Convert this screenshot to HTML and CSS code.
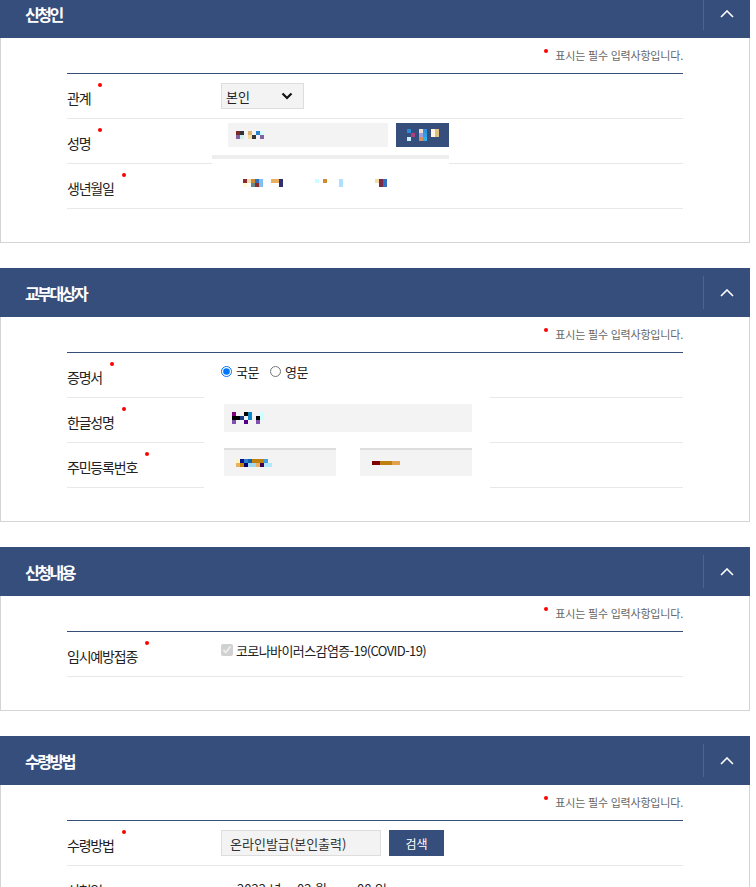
FILE: index.html
```html
<!DOCTYPE html>
<html lang="ko">
<head>
    <meta charset="UTF-8">
    <meta name="viewport" content="width=device-width, initial-scale=1.0">
    <title>신청서 작성</title>
    <link rel="stylesheet" href="styles.css">
</head>
<body>
    <div class="page">
        <!-- 신청인 -->
        <section class="panel">
            <div class="panel-head">
                <h2>신청인</h2>
                <button class="fold" type="button"><svg width="14" height="8" viewBox="0 0 14 8"><polyline points="1,7 7,1 13,7" fill="none" stroke="#fff" stroke-width="1.6"/></svg></button>
            </div>
            <div class="panel-body">
                <p class="req-note">표시는 필수 입력사항입니다.</p>
                <div class="form-table">
                    <div class="row">
                        <div class="label req">관계</div>
                        <div class="value">
                            <div class="select small">본인
                                <svg width="12" height="8" viewBox="0 0 12 8"><polyline points="1.5,1.5 6,6 10.5,1.5" fill="none" stroke="#111" stroke-width="2.2"/></svg>
                            </div>
                        </div>
                    </div>
                    <div class="row">
                        <div class="label req">성명</div>
                        <div class="value name-cell">
                            <div class="name-line">
                                <div class="field name-field">
                                    <svg class="mosaic" width="32" height="8" viewBox="0 0 32 8">
                                        <rect x="0" y="0" width="4" height="4" fill="#7b2a2a"/><rect x="4" y="0" width="4" height="4" fill="#333"/>
                                        <rect x="0" y="4" width="4" height="4" fill="#8060a0"/><rect x="4" y="4" width="4" height="4" fill="#cfeeee"/>
                                        <rect x="12" y="0" width="4" height="4" fill="#e0b070"/><rect x="12" y="4" width="4" height="4" fill="#f5dca0"/>
                                        <rect x="16" y="4" width="4" height="4" fill="#333"/><rect x="20" y="0" width="4" height="4" fill="#3080d0"/>
                                        <rect x="24" y="0" width="4" height="4" fill="#ccffff"/><rect x="24" y="4" width="4" height="4" fill="#8060a0"/>
                                    </svg>
                                </div>
                                <button class="btn name-btn" type="button">
                                    <svg width="32" height="12" viewBox="0 0 32 12">
                                        <rect x="0" y="0" width="4" height="4" fill="#2d8ad8"/><rect x="4" y="4" width="4" height="4" fill="#b04080"/>
                                        <rect x="0" y="8" width="4" height="4" fill="#cceeff"/><rect x="12" y="0" width="4" height="4" fill="#eee0d0"/>
                                        <rect x="16" y="0" width="4" height="4" fill="#3090e0"/><rect x="12" y="4" width="4" height="4" fill="#a0a0e0"/>
                                        <rect x="16" y="4" width="4" height="4" fill="#30a0e0"/><rect x="12" y="8" width="4" height="4" fill="#d09060"/>
                                        <rect x="16" y="8" width="4" height="4" fill="#30b0f0"/><rect x="24" y="0" width="4" height="8" fill="#fff5e0"/>
                                        <rect x="28" y="0" width="4" height="8" fill="#e0c080"/>
                                    </svg>
                                </button>
                            </div>
                            <div class="name-strip"></div>
                        </div>
                    </div>
                    <div class="row">
                        <div class="label req">생년월일</div>
                        <div class="value">
                            <svg class="birth" width="150" height="8" viewBox="0 0 150 8">
                                <rect x="0" y="0" width="4" height="4" fill="#8b2a2a"/><rect x="0" y="4" width="4" height="4" fill="#fffbd0"/>
                                <rect x="4" y="0" width="4" height="4" fill="#f5deb3"/><rect x="8" y="0" width="4" height="4" fill="#d08a30"/>
                                <rect x="8" y="4" width="4" height="4" fill="#6a8a8a"/><rect x="12" y="0" width="4" height="4" fill="#3070c0"/>
                                <rect x="12" y="4" width="4" height="4" fill="#8b2a2a"/><rect x="16" y="0" width="4" height="8" fill="#80c0f0"/>
                                <rect x="28" y="0" width="8" height="4" fill="#e8b060"/><rect x="36" y="0" width="4" height="8" fill="#303070"/>
                                <rect x="72" y="0" width="4" height="4" fill="#ccffff"/><rect x="80" y="0" width="4" height="4" fill="#d08a30"/>
                                <rect x="96" y="0" width="4" height="8" fill="#b0e0ff"/><rect x="132" y="0" width="4" height="4" fill="#f5dca0"/>
                                <rect x="136" y="0" width="4" height="8" fill="#7b2a4a"/><rect x="140" y="0" width="4" height="8" fill="#3070c0"/>
                            </svg>
                        </div>
                    </div>
                </div>
            </div>
        </section>

        <!-- 교부대상자 -->
        <section class="panel">
            <div class="panel-head">
                <h2>교부대상자</h2>
                <button class="fold" type="button"><svg width="14" height="8" viewBox="0 0 14 8"><polyline points="1,7 7,1 13,7" fill="none" stroke="#fff" stroke-width="1.6"/></svg></button>
            </div>
            <div class="panel-body">
                <p class="req-note">표시는 필수 입력사항입니다.</p>
                <div class="form-table">
                    <div class="row">
                        <div class="label req">증명서</div>
                        <div class="value choice">
                            <label><input type="radio" name="lang" checked> 국문</label>
                            <label><input type="radio" name="lang"> 영문</label>
                        </div>
                    </div>
                    <div class="row">
                        <div class="label req">한글성명</div>
                        <div class="value cover">
                            <div class="field wide-field">
                                <svg class="mosaic" width="32" height="12" viewBox="0 0 32 12">
                                    <rect x="0" y="0" width="4" height="4" fill="#800080"/><rect x="0" y="4" width="8" height="4" fill="#000"/>
                                    <rect x="8" y="4" width="4" height="4" fill="#1a3a8a"/><rect x="12" y="0" width="4" height="4" fill="#000"/>
                                    <rect x="16" y="0" width="4" height="8" fill="#1088c8"/><rect x="0" y="8" width="4" height="4" fill="#8050b0"/>
                                    <rect x="12" y="8" width="4" height="4" fill="#500080"/><rect x="24" y="4" width="4" height="4" fill="#000"/>
                                    <rect x="28" y="0" width="4" height="8" fill="#ccffff"/><rect x="24" y="8" width="4" height="4" fill="#8050b0"/>
                                </svg>
                            </div>
                        </div>
                    </div>
                    <div class="row">
                        <div class="label req">주민등록번호</div>
                        <div class="value cover">
                            <div class="id-pair">
                                <div class="field id-field">
                                    <svg class="mosaic" width="36" height="8" viewBox="0 0 36 8">
                                        <rect x="0" y="0" width="4" height="4" fill="#fff5c0"/><rect x="4" y="0" width="4" height="4" fill="#00108a"/>
                                        <rect x="8" y="0" width="4" height="4" fill="#3080d0"/><rect x="12" y="0" width="4" height="4" fill="#1060b0"/>
                                        <rect x="16" y="0" width="12" height="4" fill="#c08010"/><rect x="28" y="0" width="4" height="4" fill="#40a0e0"/>
                                        <rect x="0" y="4" width="4" height="4" fill="#e8b060"/><rect x="4" y="4" width="4" height="4" fill="#c08010"/>
                                        <rect x="8" y="4" width="4" height="4" fill="#000070"/><rect x="12" y="4" width="8" height="4" fill="#a0d8f0"/>
                                        <rect x="20" y="4" width="4" height="4" fill="#e8b060"/><rect x="24" y="4" width="4" height="4" fill="#400050"/>
                                        <rect x="28" y="4" width="8" height="4" fill="#b0e8ff"/>
                                    </svg>
                                </div>
                                <div class="field id-field">
                                    <svg class="mosaic" width="28" height="4" viewBox="0 0 28 4">
                                        <rect x="0" y="0" width="8" height="4" fill="#800000"/><rect x="8" y="0" width="12" height="4" fill="#c08010"/>
                                        <rect x="20" y="0" width="8" height="4" fill="#e0a050"/>
                                    </svg>
                                </div>
                            </div>
                        </div>
                    </div>
                </div>
            </div>
        </section>

        <!-- 신청내용 -->
        <section class="panel">
            <div class="panel-head">
                <h2>신청내용</h2>
                <button class="fold" type="button"><svg width="14" height="8" viewBox="0 0 14 8"><polyline points="1,7 7,1 13,7" fill="none" stroke="#fff" stroke-width="1.6"/></svg></button>
            </div>
            <div class="panel-body">
                <p class="req-note">표시는 필수 입력사항입니다.</p>
                <div class="form-table">
                    <div class="row">
                        <div class="label req">임시예방접종</div>
                        <div class="value choice">
                            <label class="check"><input type="checkbox" checked disabled> 코로나바이러스감염증-19(COVID-19)</label>
                        </div>
                    </div>
                </div>
            </div>
        </section>

        <!-- 수령방법 -->
        <section class="panel">
            <div class="panel-head">
                <h2>수령방법</h2>
                <button class="fold" type="button"><svg width="14" height="8" viewBox="0 0 14 8"><polyline points="1,7 7,1 13,7" fill="none" stroke="#fff" stroke-width="1.6"/></svg></button>
            </div>
            <div class="panel-body">
                <p class="req-note">표시는 필수 입력사항입니다.</p>
                <div class="form-table">
                    <div class="row">
                        <div class="label req">수령방법</div>
                        <div class="value search">
                            <div class="select receive">온라인발급(본인출력)</div>
                            <button class="btn search-btn" type="button">검색</button>
                        </div>
                    </div>
                    <div class="row">
                        <div class="label">신청일</div>
                        <div class="value dates">
                            <span class="date-part">2022 년</span>
                            <span class="date-part">02 월</span>
                            <span class="date-part">08 일</span>
                        </div>
                    </div>
                </div>
            </div>
        </section>
    </div>
</body>
</html>
```

FILE: styles.css
```css
body {
    margin: 0;
    padding: 0;
    font-family: "Noto Sans CJK KR", "Noto Sans", sans-serif;
    color: #222;
    background: #fff;
}

.page {
    width: 750px;
    margin-top: -11px; /* page is scrolled a little */
}

.panel {
    margin-bottom: 25px;
}

/* Panel header */
.panel-head {
    display: flex;
    align-items: center;
    height: 49px;
    padding-left: 25px;
    background-color: #354e7b;
}

.panel-head h2 {
    flex: 1;
    margin: 0;
    color: #fff;
    font-size: 16px;
    font-weight: 700;
    letter-spacing: -2.5px;
}

.fold {
    display: flex;
    align-items: center;
    justify-content: center;
    width: 47px;
    height: 33px;
    padding: 0;
    border: none;
    border-left: 1px solid #4c6490;
    background: none;
}

/* Panel body */
.panel-body {
    border: 1px solid #d4d4d4;
    border-top: none;
    padding: 0 66px 33px 66px;
}

.req-note {
    margin: 0 0 9px 0;
    padding-top: 8px;
    height: 18px;
    line-height: 18px;
    text-align: right;
    font-size: 11px;
    color: #666;
    letter-spacing: -0.2px;
}

.req-note::before {
    content: "";
    display: inline-block;
    width: 4px;
    height: 4px;
    margin-right: 7px;
    border-radius: 50%;
    background: #f00;
    vertical-align: 7px;
}

.form-table {
    border-top: 1px solid #354e7b;
}

.row {
    display: flex;
    align-items: center;
    height: 44px;
    border-bottom: 1px solid #e8e8e8;
}

.label {
    width: 154px;
    flex-shrink: 0;
    padding-top: 3px;
    font-size: 14px;
    letter-spacing: -1.2px;
    color: #222;
}

.label.req::after {
    content: "";
    display: inline-block;
    width: 4px;
    height: 4px;
    margin-left: 8px;
    border-radius: 50%;
    background: #f00;
    position: relative;
    top: -17px;
}

.value {
    display: flex;
    align-items: center;
    font-size: 13px;
}

/* Inputs and buttons */
.select {
    display: flex;
    align-items: center;
    justify-content: space-between;
    box-sizing: border-box;
    height: 26px;
    padding: 0 10px 0 4px;
    background: #f3f3f3;
    border: 1px solid #ddd;
    font-size: 13px;
    color: #222;
}

.select.small {
    width: 83px;
}

.field {
    display: flex;
    align-items: center;
    box-sizing: border-box;
    background: #f3f3f3;
}

.btn {
    display: flex;
    align-items: center;
    justify-content: center;
    padding: 0;
    border: none;
    background-color: #354e7b;
    color: #fff;
    font-family: inherit;
}

/* 성명 */
.name-cell {
    align-self: stretch;
    flex-direction: column;
    align-items: flex-start;
    margin-left: -9px;
    margin-bottom: -1px;
}

.name-line {
    display: flex;
    gap: 8px;
    margin-top: 4px;
    padding-left: 16px;
}

.name-field {
    width: 160px;
    height: 24px;
    padding-left: 8px;
}

.name-btn {
    width: 53px;
    height: 24px;
}

.name-strip {
    width: 237px;
    height: 5px;
    margin-top: 8px;
    border-top: 4px solid #eee;
    background: #fff;
}

.birth {
    margin: 0 0 6px 22px;
}

/* 교부대상자 */
.choice {
    margin-bottom: 8px;
}

.choice label {
    display: inline-flex;
    align-items: center;
    margin-right: 11px;
    font-size: 13px;
    letter-spacing: -0.5px;
}

.choice input {
    width: 11px;
    height: 11px;
    margin: 0 4px 0 0;
}

.choice .check {
    letter-spacing: -0.6px;
}

.choice .check input {
    width: 12px;
    height: 12px;
    margin-right: 3px;
}

.cover {
    align-self: stretch;
    flex-direction: column;
    justify-content: center;
    align-items: flex-start;
    width: 286px;
    margin: -1px 0 -1px -17px;
    padding-left: 20px;
    box-sizing: border-box;
    background: #fff;
}

.wide-field {
    width: 248px;
    height: 28px;
    padding-left: 8px;
    margin-top: -4px;
}

.id-pair {
    display: flex;
    gap: 24px;
    margin-top: -6px;
}

.id-field {
    width: 112px;
    height: 28px;
    padding-left: 12px;
    border-top: 2px solid #ddd;
}

/* 수령방법 */
.search {
    gap: 8px;
}

.receive {
    width: 160px;
    padding-left: 8px;
    color: #333;
}

.search-btn {
    width: 55px;
    height: 26px;
    font-size: 12px;
}

.dates {
    padding-left: 16px;
}

.date-part {
    width: 60px;
    font-size: 13px;
}
```
